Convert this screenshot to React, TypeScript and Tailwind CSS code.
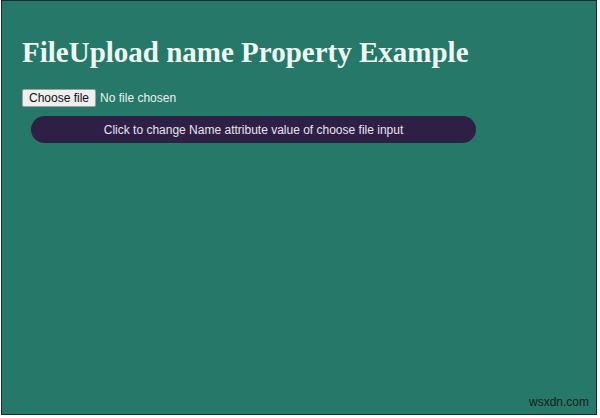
export default function App() {
  return (
    <div className="w-[600px] h-[418px] bg-white pl-[1px] pr-[3px] pb-[3px]">
      <div className="relative w-full h-full border border-[#1c2a26] bg-[#267868] px-[20px] pt-[35px]">
        <h1 className="text-[29px] leading-[32px] font-bold text-[#eef8f2] font-['Liberation_Serif',serif]">
          FileUpload name Property Example
        </h1>
        <div className="mt-[21px] flex items-center gap-[4px] font-['Liberation_Sans',Arial,sans-serif] text-[12px]">
          <span className="h-[18px] px-[6px] flex items-center bg-[#efefef] border border-[#a0a0a0] rounded-[2px] text-[#111]">
            Choose file
          </span>
          <span className="text-[#eaf4f0]">No file chosen</span>
        </div>
        <div className="mt-[9px] ml-[9px] w-[445px] h-[27px] rounded-full bg-[#2e1f45] flex items-center justify-center font-['Liberation_Sans',Arial,sans-serif] text-[12px] text-[#e8e4f0]">
          Click to change Name attribute value of choose file input
        </div>
        <div className="absolute right-[7px] bottom-[3px] text-[12px] text-[#1a1a1a] font-['Liberation_Sans',Arial,sans-serif]">
          wsxdn.com
        </div>
      </div>
    </div>
  );
}
